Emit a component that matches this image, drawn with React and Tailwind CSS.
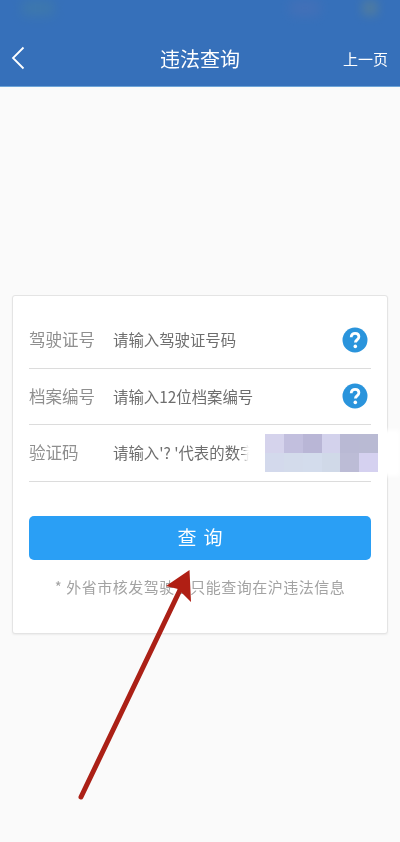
import React from "react";

const Help = () => (
  <svg viewBox="0 0 26 26" className="w-[26px] h-[26px] shrink-0">
    <circle cx="13" cy="13" r="12.5" fill="#2a94dc" />
    <path d="M9.200 10.200c0-2.400 1.700-3.800 3.900-3.800s3.800 1.300 3.800 3.400c0 1.600-.9 2.400-2 3.200-1 .7-1.500 1.200-1.500 2.500" fill="none" stroke="#fff" strokeWidth="2.800" />
    <circle cx="13.300" cy="19.400" r="1.800" fill="#fff" />
  </svg>
);

const Row = ({ label, hint, help }) => (
  <div className="h-[56.5px] flex items-center border-b border-[#dcdcdc]">
    <span className="w-[84px] text-[16.5px] text-[#8f8f8f]">{label}</span>
    <span className="flex-1 text-[15.4px] text-[#6e6e6e] whitespace-nowrap overflow-hidden">{hint}</span>
    {help && <span className="mr-[3px]"><Help /></span>}
  </div>
);

const mosaic = [
  "bg-[#d5d3ec]", "bg-[#c2bfde]", "bg-[#b9b6d6]", "bg-[#d3d2ec]", "bg-[#b9b9d4]", "bg-[#b9bad3]",
  "bg-[#d3d9ec]", "bg-[#d3dbeb]", "bg-[#d3dcec]", "bg-[#d0d9e8]", "bg-[#bcbcd6]", "bg-[#d5d1f0]",
];

export default function App() {
  return (
    <div className="relative w-[400px] h-[842px] overflow-hidden bg-[#fafafa] blur-[0.35px] font-['Noto_Sans_CJK_SC','Noto_Sans',sans-serif]">
      <header className="relative h-[87px] bg-[#3670ba] border-b border-[#6ea5d8] flex items-start pt-[46px] px-3 text-white overflow-hidden">
        <div className="w-[46px] -ml-px">
          <svg viewBox="0 0 14 24" className="w-[14px] h-[24px]">
            <path d="M12.500 1.500 2 12l10.500 10.500" fill="none" stroke="#fff" strokeWidth="1.800" />
          </svg>
        </div>
        <h1 className="flex-1 text-center text-[20px] leading-[26px] font-normal">违法查询</h1>
        <span className="w-[45px] text-right text-[15px] leading-[26px] whitespace-nowrap">上一页</span>
        <div className="absolute left-[22px] top-0 w-[32px] h-[16px] bg-[#4f8a8f] opacity-30 blur-[6px]" />
        <div className="absolute left-[290px] top-0 w-[30px] h-[16px] bg-[#6a70b0] opacity-25 blur-[6px]" />
        <div className="absolute left-[362px] top-0 w-[16px] h-[16px] bg-[#6f8a80] opacity-40 blur-[5px]" />
      </header>

      <main className="pt-[208px] px-3">
        <section className="h-[339px] bg-white border border-[#e4e4e4] rounded-[3px] px-4 pt-4 shadow-[0_1px_2px_rgba(0,0,0,0.06)]">
          <Row label="驾驶证号" hint="请输入驾驶证号码" help />
          <Row label="档案编号" hint="请输入12位档案编号" help />
          <Row label="验证码" hint="请输入'? '代表的数字" />
          <button className="mt-[34px] w-full h-[44px] rounded-[5px] bg-[#2a9ff5] text-white text-[19px] tracking-[7px] pl-[7px]">查询</button>
          <p className="mt-[16px] text-center text-[15px] leading-[22px] tracking-[0.5px] text-[#a3a3a3] whitespace-nowrap">* 外省市核发驾驶证只能查询在沪违法信息</p>
        </section>
      </main>

      <div className="absolute left-[245px] top-[430px] w-[155px] h-[46px] bg-white blur-[2px]" />
      <div className="absolute left-[265px] top-[434px] w-[113px] h-[38px] grid grid-cols-6 grid-rows-2">
        {mosaic.map((c, i) => <div key={i} className={c} />)}
      </div>

      <svg viewBox="0 0 400 842" className="absolute inset-0 w-[400px] h-[842px] pointer-events-none">
        <path d="M81 797 180 590" stroke="#ab2016" strokeWidth="5" strokeLinecap="round" fill="none" />
        <path d="M189.500 570 166 586 178 589 191 602Z" fill="#b01f14" />
      </svg>
    </div>
  );
}
